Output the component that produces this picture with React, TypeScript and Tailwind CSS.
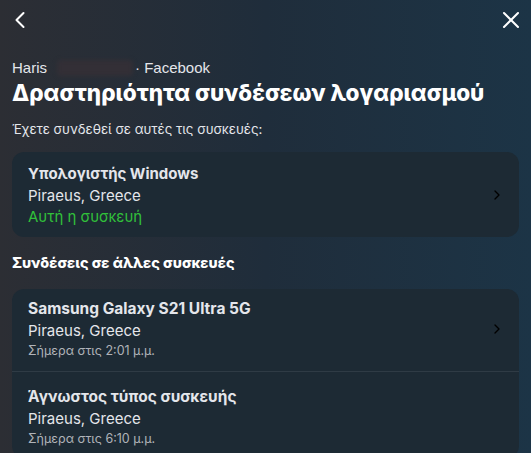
import { ChevronLeft, ChevronRight, X } from "lucide-react";

type Session = {
  device: string;
  place: string;
  when: string;
  arrow?: boolean;
};

const others: Session[] = [
  { device: "Samsung Galaxy S21 Ultra 5G", place: "Piraeus, Greece", when: "Σήμερα στις 2:01 μ.μ.", arrow: true },
  { device: "Άγνωστος τύπος συσκευής", place: "Piraeus, Greece", when: "Σήμερα στις 6:10 μ.μ." },
];

function Row({ s, pad }: { s: Session; pad: string }) {
  return (
    <div className={`flex items-center px-4 ${pad}`}>
      <div className="flex-1 flex flex-col">
        <span className="text-[15.5px] font-bold leading-[22px] text-[#e4e6eb]">{s.device}</span>
        <span className="text-[15px] leading-[21px] text-[#e4e6eb]">{s.place}</span>
        <span className="text-[12.5px] leading-[19px] text-[#b0b3b8]">{s.when}</span>
      </div>
      {s.arrow && <ChevronRight className="h-4 w-4 text-black -mr-[2px]" strokeWidth={2} />}
    </div>
  );
}

export default function App() {
  return (
    <div
      className="w-[531px] h-[453px] overflow-hidden text-white bg-gradient-to-r from-[#2c2e34] via-[#1f2d3b] to-[#1c3446]"
      style={{ fontFamily: "Inter, 'Noto Sans', sans-serif" }}
    >
      <div className="flex justify-between items-center pl-[6px] pr-[6px] h-[40px]">
        <ChevronLeft className="h-7 w-7 text-white" strokeWidth={1.75} />
        <X className="h-7 w-7 text-white" strokeWidth={1.75} />
      </div>

      <div className="px-3 pt-[18px]">
        <div className="flex items-center text-[15px] leading-[20px] text-[#e4e6eb]" style={{ fontFamily: "'Liberation Sans', Arial, sans-serif" }}>
          <span>Haris</span>
          <span className="ml-[10px] w-[76px] h-[16px] rounded bg-[#332f36] blur-[2px]" />
          <span className="ml-[2px]">· Facebook</span>
        </div>
        <h1 className="text-[22.5px] font-extrabold leading-[30px] text-white">
          Δραστηριότητα συνδέσεων λογαριασμού
        </h1>
        <p className="mt-[11px] text-[13.3px] leading-[20px] text-[#e4e6eb]">
          Έχετε συνδεθεί σε αυτές τις συσκευές:
        </p>

        <div className="mt-[13px] rounded-xl bg-[#1d2a34] flex items-center px-4 h-[85px]">
          <div className="flex-1 flex flex-col">
            <span className="text-[15px] font-bold leading-[22px] text-[#e4e6eb]">Υπολογιστής Windows</span>
            <span className="text-[15px] leading-[22px] text-[#e4e6eb]">Piraeus, Greece</span>
            <span className="text-[15px] leading-[20px] text-[#31c13a]">Αυτή η συσκευή</span>
          </div>
          <ChevronRight className="h-4 w-4 text-black -mr-[2px]" strokeWidth={2} />
        </div>

        <h2 className="mt-[15px] text-[14.5px] font-extrabold leading-[22px] text-white">
          Συνδέσεις σε άλλες συσκευές
        </h2>

        <div className="mt-[15px] rounded-xl bg-[#1d2a34]">
          <Row s={others[0]} pad="pt-[9px] pb-[11px]" />
          <div className="h-px bg-[#2f3b45]" />
          <Row s={others[1]} pad="pt-[14px] pb-[10px]" />
        </div>
      </div>
    </div>
  );
}
